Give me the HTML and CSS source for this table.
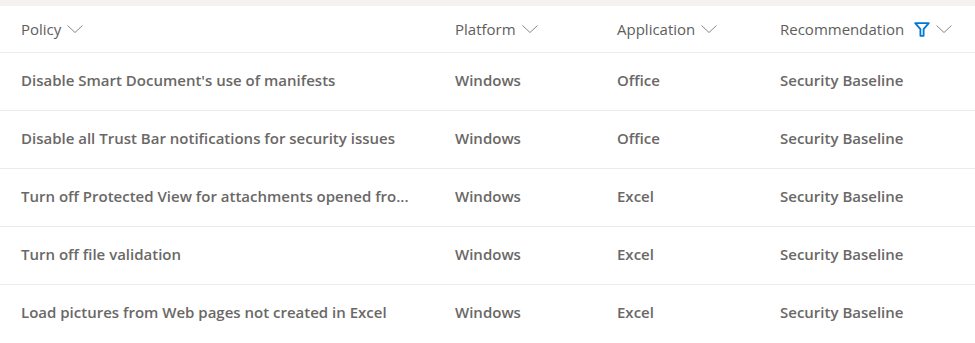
FILE: index.html
```html
<!DOCTYPE html>
<html lang="en">
<head>
    <meta charset="UTF-8">
    <title>Policies</title>
    <link rel="stylesheet" href="styles.css">
</head>
<body>
    <div class="topbar"></div>
    <div class="grid">
        <div class="row header">
            <div class="cell">Policy <svg class="chev" viewBox="0 0 16 8"><polyline points="0.5 0.5 8 7.5 15.5 0.5"></polyline></svg></div>
            <div class="cell">Platform <svg class="chev" viewBox="0 0 16 8"><polyline points="0.5 0.5 8 7.5 15.5 0.5"></polyline></svg></div>
            <div class="cell">Application <svg class="chev" viewBox="0 0 16 8"><polyline points="0.5 0.5 8 7.5 15.5 0.5"></polyline></svg></div>
            <div class="cell">Recommendation
                <svg class="filter" viewBox="0 0 16 15"><path d="M1.2 1.2h13.6l-5.2 6v6.6h-3.2v-6.6z"></path></svg>
                <svg class="chev" viewBox="0 0 16 8"><polyline points="0.5 0.5 8 7.5 15.5 0.5"></polyline></svg>
            </div>
        </div>
        <div class="row">
            <div class="cell">Disable Smart Document's use of manifests</div>
            <div class="cell">Windows</div>
            <div class="cell">Office</div>
            <div class="cell">Security Baseline</div>
        </div>
        <div class="row">
            <div class="cell">Disable all Trust Bar notifications for security issues</div>
            <div class="cell">Windows</div>
            <div class="cell">Office</div>
            <div class="cell">Security Baseline</div>
        </div>
        <div class="row">
            <div class="cell" title="Turn off Protected View for attachments opened from Outlook">Turn off Protected View for attachments opened fro...</div>
            <div class="cell">Windows</div>
            <div class="cell">Excel</div>
            <div class="cell">Security Baseline</div>
        </div>
        <div class="row">
            <div class="cell">Turn off file validation</div>
            <div class="cell">Windows</div>
            <div class="cell">Excel</div>
            <div class="cell">Security Baseline</div>
        </div>
        <div class="row last">
            <div class="cell">Load pictures from Web pages not created in Excel</div>
            <div class="cell">Windows</div>
            <div class="cell">Excel</div>
            <div class="cell">Security Baseline</div>
        </div>
    </div>
</body>
</html>
```

FILE: styles.css
```css
body {
    margin: 0;
    background-color: white;
    font-family: 'Open Sans', 'Noto Sans', sans-serif;
    font-size: 15px;
    color: #605e5c;
}

.topbar {
    height: 6px;
    background-color: #f3f2f1;
}

.row {
    display: grid;
    grid-template-columns: 434px 162px 163px 1fr;
    height: 58px;
    padding-bottom: 4px;
    box-sizing: border-box;
    align-items: center;
    border-bottom: 1px solid #edebe9;
    font-weight: 600;
    color: #6a6866;
}

.row.last {
    border-bottom: none;
}

.row.header {
    height: 47px;
    padding-bottom: 0;
    font-weight: 400;
    color: #605e5c;
}

.cell {
    padding-left: 21px;
    padding-right: 20px;
    white-space: nowrap;
}

.header .cell {
    display: flex;
    align-items: center;
}

.chev {
    width: 16px;
    height: 8px;
    margin-left: 6px;
    fill: none;
    stroke: #8a8886;
    stroke-width: 1;
}

.filter {
    width: 16px;
    height: 15px;
    margin-left: 10px;
    fill: none;
    stroke: #0078d4;
    stroke-width: 1.8;
    stroke-linejoin: round;
}

.filter + .chev {
    margin-left: 6px;
}
```
